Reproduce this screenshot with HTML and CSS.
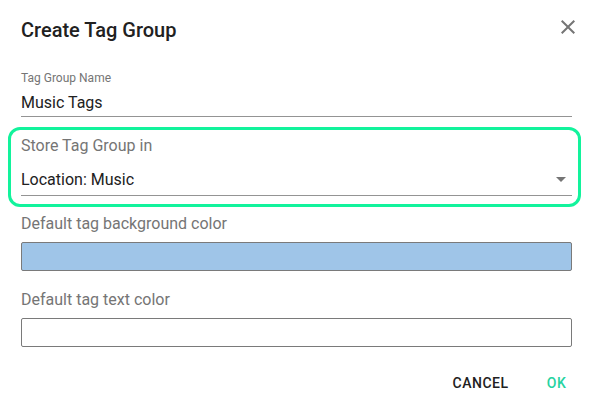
FILE: index.html
```html
<!DOCTYPE html>
<html>
<head>
<meta charset="utf-8">
<link rel="stylesheet" href="styles.css">
</head>
<body>
<div class="dialog">
  <div class="header">
    <h2 class="title">Create Tag Group</h2>
    <button class="close" aria-label="Close">
      <svg viewBox="0 0 24 24" width="24" height="24"><path d="M19 6.41L17.59 5 12 10.59 6.41 5 5 6.41 10.59 12 5 17.59 6.41 19 12 13.41 17.59 19 19 17.59 13.41 12z" fill="#757575"/></svg>
    </button>
  </div>
  <div class="content">
    <div class="field">
      <div class="small-label">Tag Group Name</div>
      <div class="input">Music Tags</div>
    </div>
    <div class="focus-box">
      <div class="label">Store Tag Group in</div>
      <div class="select">
        <span>Location: Music</span>
        <span class="arrow"></span>
      </div>
    </div>
    <div class="label label-gap">Default tag background color</div>
    <div class="swatch swatch-blue"></div>
    <div class="label label-gap2">Default tag text color</div>
    <div class="swatch swatch-white"></div>
  </div>
  <div class="actions">
    <button class="btn btn-cancel">CANCEL</button>
    <button class="btn btn-ok">OK</button>
  </div>
</div>
</body>
</html>
```
FILE: styles.css
```css
html, body {
  margin: 0;
  padding: 0;
  background: #ffffff;
}
body {
  font-family: Roboto, "Liberation Sans", sans-serif;
  color: #212121;
}
.dialog {
  width: 592px;
  height: 404px;
  box-sizing: border-box;
}
.header {
  display: flex;
  justify-content: space-between;
  align-items: flex-start;
  padding: 18px 12px 0 21px;
}
.title {
  margin: 0;
  font-size: 20px;
  font-weight: 500;
  line-height: 24px;
  color: #212121;
}
.close {
  border: 0;
  background: none;
  padding: 0;
  margin-top: -3px;
  width: 24px;
  height: 24px;
  display: block;
}
.close svg { display: block; }
.content {
  padding: 28px 20px 0 21px;
}
.small-label {
  font-size: 12px;
  line-height: 16px;
  color: #757575;
  margin-bottom: 5px;
}
.input {
  font-size: 16px;
  line-height: 24px;
  padding-bottom: 1px;
  border-bottom: 1px solid #949494;
}
.focus-box {
  margin: 10px -9px 0 -13px;
  border: 3px solid #12f39c;
  border-radius: 12px;
  padding: 3.5px 6px 7.5px 10px;
}
.label {
  font-size: 16px;
  line-height: 24px;
  color: #757575;
}
.select {
  display: flex;
  justify-content: space-between;
  align-items: center;
  margin-top: 10px;
  font-size: 16px;
  line-height: 24px;
  padding-bottom: 3.5px;
  border-bottom: 1px solid #949494;
}
.arrow {
  width: 0;
  height: 0;
  border-left: 5px solid transparent;
  border-right: 5px solid transparent;
  border-top: 5px solid #757575;
  margin-right: 6px;
}
.label-gap { margin-top: 5px; }
.label-gap2 { margin-top: 16.5px; }
.swatch {
  margin-top: 6.5px;
  height: 29px;
  box-sizing: border-box;
  border: 1px solid #7a7a7a;
  border-radius: 2px;
}
.swatch-blue { background: #9fc5e8; }
.swatch-white { background: #ffffff; }
.actions {
  display: flex;
  justify-content: flex-end;
  gap: 8px;
  padding: 18px 3.5px 0 0;
}
.btn {
  min-width: 64px;
  padding: 0 8px;
  height: 36px;
  border: 0;
  background: none;
  font-family: Roboto, "Liberation Sans", sans-serif;
  font-size: 14px;
  font-weight: 500;
  letter-spacing: 0.5px;
  text-transform: uppercase;
}
.btn-cancel { color: #212121; }
.btn-ok { color: #26d39f; }
```
